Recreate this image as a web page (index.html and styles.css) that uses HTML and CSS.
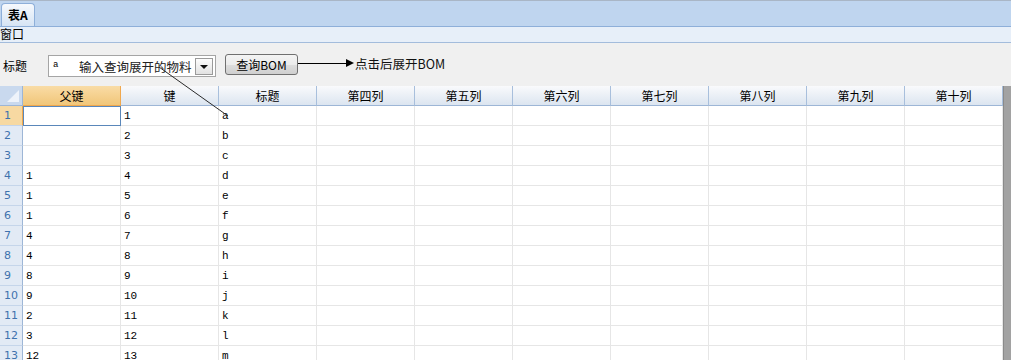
FILE: index.html
```html
<!DOCTYPE html>
<html lang="zh-CN">
<head>
  <meta charset="UTF-8" />
  <title>表A</title>
  <link rel="stylesheet" href="styles.css">
</head>
<body>

  <!-- Tab strip -->
  <div class="tabbar">
    <div class="tab">表A</div>
  </div>
  <div class="menubar">窗口</div>

  <!-- Query toolbar -->
  <div class="toolbar">
    <span class="label">标题</span>
    <div class="combo">
      <span class="combo-value">a</span>
      <span class="combo-hint">输入查询展开的物料</span>
      <span class="combo-drop"><i></i></span>
    </div>
    <button class="query-btn">查询BOM</button>
    <span class="arrow-line"></span>
    <span class="arrow-head"></span>
    <span class="note">点击后展开BOM</span>
  </div>

  <!-- Sheet -->
  <div class="sheet">
    <div class="grid" id="grid"></div>
    <div class="vscroll"></div>
  </div>

  <svg class="annotation" width="1011" height="360">
    <line x1="159" y1="67" x2="228" y2="116" stroke="#2a2a2a" stroke-width="1" />
  </svg>

  <script>
    const headers = ['父键', '键', '标题', '第四列', '第五列', '第六列', '第七列', '第八列', '第九列', '第十列'];
    const rows = [
      ['', '1', 'a'], ['', '2', 'b'], ['', '3', 'c'], ['1', '4', 'd'],
      ['1', '5', 'e'], ['1', '6', 'f'], ['4', '7', 'g'], ['4', '8', 'h'],
      ['8', '9', 'i'], ['9', '10', 'j'], ['2', '11', 'k'], ['3', '12', 'l'],
      ['12', '13', 'm']
    ];

    const grid = document.getElementById('grid');
    let html = '<div class="corner"></div>';
    headers.forEach((h, i) => {
      html += `<div class="colhead${i === 0 ? ' active' : ''}">${h}</div>`;
    });
    rows.forEach((r, ri) => {
      html += `<div class="rowhead${ri === 0 ? ' active' : ''}">${ri + 1}</div>`;
      for (let c = 0; c < headers.length; c++) {
        const sel = ri === 0 && c === 0 ? ' selected' : '';
        html += `<div class="cell${sel}">${r[c] || ''}</div>`;
      }
    });
    grid.innerHTML = html;
  </script>

</body>
</html>
```

FILE: styles.css
```css
body {
  margin: 0;
  font-family: "Noto Sans CJK SC", "DejaVu Sans", sans-serif;
  font-size: 12px;
  color: #000;
  background: #fff;
  position: relative;
  overflow: hidden;
  height: 360px;
}
.tabbar {
  height: 27px;
  box-sizing: border-box;
  background: #bfd5ef;
  border-top: 1px solid #a9b6c6;
  border-bottom: 1px solid #8eafd9;
  padding: 3px 0 0 1px;
  display: flex;
  align-items: flex-end;
}
.tab {
  width: 34px;
  height: 23px;
  box-sizing: border-box;
  border: 1px solid #8eafd9;
  border-bottom: none;
  border-radius: 4px 4px 0 0;
  background: linear-gradient(#f6f9fd, #d6e4f4);
  font-weight: bold;
  font-size: 12px;
  line-height: 22px;
  padding-left: 6px;
}
.menubar {
  height: 16px;
  box-sizing: border-box;
  background: #e7eff9;
  border-bottom: 1px solid #a3bcdc;
  line-height: 14px;
  font-size: 12px;
}
.toolbar {
  height: 43px;
  background: #f0f0f0;
  display: flex;
  align-items: center;
  padding: 2px 0 0 3px;
  box-sizing: border-box;
}
.label {
  font-size: 12px;
  width: 45px;
}
.combo {
  width: 168px;
  height: 22px;
  box-sizing: border-box;
  border: 1px solid #a5a5a5;
  background: #fff;
  display: flex;
  align-items: center;
  padding-left: 4px;
  margin-top: 1px;
}
.combo-value {
  font-family: "Liberation Mono", monospace;
  font-size: 9px;
  width: 26px;
  margin-top: -2px;
}
.combo-hint {
  font-size: 12.5px;
  color: #222;
  flex: 1;
}
.combo-drop {
  width: 18px;
  height: 17px;
  box-sizing: border-box;
  border: 1px solid #9a9a9a;
  background: linear-gradient(#fdfdfd, #e2e2e2);
  margin-right: 2px;
  display: flex;
  align-items: center;
  justify-content: center;
}
.combo-drop i {
  width: 0;
  height: 0;
  border-left: 4px solid transparent;
  border-right: 4px solid transparent;
  border-top: 4px solid #111;
  margin-top: 1px;
}
.query-btn {
  margin-left: 9px;
  width: 73px;
  height: 21px;
  box-sizing: border-box;
  border: 1px solid #707070;
  border-radius: 3px;
  background: linear-gradient(#f4f4f4 0%, #ebebeb 50%, #dddddd 51%, #cfcfcf 100%);
  font-family: "Noto Sans CJK SC", sans-serif;
  font-size: 12px;
  padding: 0;
  color: #000;
  margin-top: -3px;
}
.arrow-line {
  width: 48px;
  height: 1px;
  background: #000;
  margin-top: -5px;
}
.arrow-head {
  width: 0;
  height: 0;
  border-top: 4px solid transparent;
  border-bottom: 4px solid transparent;
  border-left: 8px solid #000;
  margin-top: -5px;
}
.note {
  font-size: 12.5px;
  margin-left: 1px;
  margin-top: -5px;
  color: #111;
}
.sheet {
  display: flex;
}
.grid {
  display: grid;
  grid-template-columns: 23px repeat(10, 98px);
  grid-auto-rows: 20px;
}
.corner {
  background: #c9d9ee;
  border-right: 1px solid #9db6d6;
  border-bottom: 1px solid #9db6d6;
  position: relative;
}
.corner::after {
  content: "";
  position: absolute;
  right: 3px;
  bottom: 3px;
  border-left: 12px solid transparent;
  border-bottom: 12px solid #eef3fa;
}
.colhead {
  background: linear-gradient(#f9fafc, #dce5f0);
  border-right: 1px solid #a8bfdc;
  border-bottom: 1px solid #9db6d6;
  text-align: center;
  line-height: 19px;
  font-size: 12px;
}
.colhead.active {
  background: linear-gradient(#f9dca6, #f1c679);
  border-right-color: #f0a84e;
  border-bottom-color: #f0a84e;
}
.rowhead {
  background: #e2eaf5;
  border-right: 1px solid #9db6d6;
  border-bottom: 1px solid #c5d5ea;
  color: #3f72ad;
  padding-left: 4px;
  line-height: 20px;
  font-family: "DejaVu Sans", sans-serif;
  font-size: 11px;
}
.rowhead.active {
  background: #f7d9a2;
  border-right-color: #f0a84e;
}
.cell {
  border-right: 1px solid #e6e6e6;
  border-bottom: 1px solid #e6e6e6;
  padding-left: 3px;
  line-height: 20px;
  font-family: "Liberation Mono", monospace;
  font-size: 11px;
}
.cell.selected {
  border: 1px solid #5a87ba;
  padding-left: 2px;
  line-height: 18px;
}
.vscroll {
  width: 8px;
  background: #a2a2a2;
  border-left: 1px solid #8a8a8a;
}
.annotation {
  position: absolute;
  left: 0;
  top: 0;
  pointer-events: none;
}
```
